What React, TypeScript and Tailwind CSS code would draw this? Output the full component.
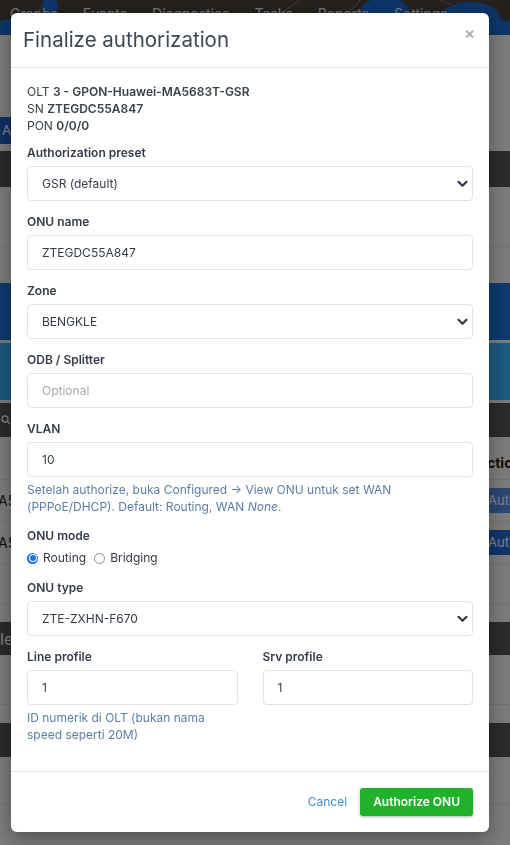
import React from 'react';

const navItems = ['Graphs', 'Events', 'Diagnostics', 'Tasks', 'Reports', 'Settings'];

function Chevron() {
  return (
    <svg width="11" height="8" viewBox="0 0 11 8" fill="none">
      <path d="M1.5 1.8 5.5 5.8 9.5 1.8" stroke="#2f3a47" strokeWidth="2.2" strokeLinecap="round" strokeLinejoin="round" />
    </svg>
  );
}

function Label({ children }: { children: React.ReactNode }) {
  return <div className="mb-1 text-[12px] font-semibold leading-[18px] text-[#343d48]">{children}</div>;
}

function Field({ value, placeholder }: { value?: string; placeholder?: string }) {
  return (
    <div className="flex h-[35px] items-center rounded-[4px] border border-[#dfe5ec] bg-white px-[14px] text-[12px]">
      {value ? <span className="text-[#333c47]">{value}</span> : <span className="text-[#a3aab3]">{placeholder}</span>}
    </div>
  );
}

function Select({ value }: { value: string }) {
  return (
    <div className="flex h-[35px] items-center justify-between rounded-[4px] border border-[#dfe5ec] bg-white pl-[14px] pr-[4px] text-[12px] text-[#333c47]">
      <span>{value}</span>
      <Chevron />
    </div>
  );
}

function Radio({ checked, label }: { checked?: boolean; label: string }) {
  return (
    <div className="flex items-center gap-[5px]">
      {checked ? (
        <span className="flex h-[11px] w-[11px] items-center justify-center rounded-full bg-[#1a73e8]">
          <span className="flex h-[8px] w-[8px] items-center justify-center rounded-full bg-white">
            <span className="h-[6px] w-[6px] rounded-full bg-[#1a73e8]" />
          </span>
        </span>
      ) : (
        <span className="h-[11px] w-[11px] rounded-full border border-[#8a8f96] bg-white" />
      )}
      <span className="text-[12px] text-[#333c47]">{label}</span>
    </div>
  );
}

// page underneath the dialog
function Page() {
  return (
    <div className="min-h-screen overflow-hidden bg-[#f7f7f7] font-['Inter',sans-serif]">
      <nav className="relative flex h-[35px] items-start gap-[25px] overflow-hidden bg-[#4a423b] pl-[10px] pt-[3px] text-[14px] text-[#e8e8e8]">
        <svg className="absolute inset-0" width="510" height="35" viewBox="0 0 510 35">
          <path d="M0 28 L30 20 L48 0 M48 0 L62 30 M30 20 L80 35" stroke="#9ab" strokeWidth="0.6" fill="none" />
          <ellipse cx="15" cy="28" rx="22" ry="9" fill="#1a6ad0" />
          <ellipse cx="50" cy="6" rx="8" ry="8" fill="#1a6ad0" />
          <ellipse cx="68" cy="25" rx="14" ry="8" fill="#1a6ad0" />
          <path d="M250 35 L300 0 M330 35 L360 0 M440 0 L510 30 M380 5 L420 35" stroke="#9ab" strokeWidth="0.6" fill="none" />
          <ellipse cx="385" cy="10" rx="24" ry="12" fill="#1a6ad0" />
          <ellipse cx="350" cy="30" rx="30" ry="10" fill="#1a6ad0" />
          <ellipse cx="470" cy="18" rx="30" ry="16" fill="#1a6ad0" />
          <ellipse cx="500" cy="30" rx="20" ry="10" fill="#1a6ad0" />
        </svg>
        {navItems.map(n => (
          <span key={n} className="relative">
            {n}
          </span>
        ))}
      </nav>
      <div className="h-[82px]" />
      <div className="h-[27px] w-[70px] rounded-r bg-[#1f5fc4] pl-[2px] pt-[4px] text-[13px] text-white">Auth</div>
      <div className="mt-[7px] h-[36px] bg-[#555]" />
      <div className="h-[60px] border-b border-[#e3e3e3]" />
      <div className="h-[36px]" />
      <div className="h-[57px] bg-[#1b74de]" />
      <div className="mt-[3px] h-[57px] bg-[#3ab0ff]" />
      <div className="mt-[3px] flex h-[34px] items-center bg-[#555] pl-[1px] text-white">
        <svg width="10" height="10" viewBox="0 0 10 10">
          <circle cx="4" cy="4" r="3" stroke="#fff" strokeWidth="1.4" fill="none" />
          <path d="M6.3 6.3 9 9" stroke="#fff" strokeWidth="1.4" />
        </svg>
      </div>
      <div className="flex h-[43px] items-end justify-end border-b border-[#e3e3e3] pb-[6px] text-[14px] font-bold text-[#222]">
        <span className="w-[23px] overflow-hidden whitespace-nowrap">ction</span>
      </div>
      <div className="flex h-[42px] items-center justify-between border-b border-[#e3e3e3] text-[14px] text-[#222]">
        <span className="ml-[-2px]">A5683T</span>
        <span className="h-[25px] w-[23px] overflow-hidden rounded-l bg-[#5a8ce8] pl-[1px] pt-[3px] text-[13px] text-white">Auth</span>
      </div>
      <div className="flex h-[42px] items-center justify-between border-b border-[#e3e3e3] text-[14px] text-[#222]">
        <span className="ml-[-2px]">A5683T</span>
        <span className="h-[25px] w-[23px] overflow-hidden rounded-l bg-[#1f6ad8] pl-[1px] pt-[3px] text-[13px] text-white">Auth</span>
      </div>
      <div className="h-[41px] border-b border-[#e3e3e3]" />
      <div className="h-[17px]" />
      <div className="flex h-[33px] items-center bg-[#555] text-[16px] text-white">le</div>
      <div className="h-[50px] border-b border-[#e3e3e3]" />
      <div className="h-[18px]" />
      <div className="h-[34px] bg-[#555]" />
      <div className="h-[48px] border-b border-[#e3e3e3]" />
    </div>
  );
}

export default function App() {
  return (
    <div className="relative">
      <Page />
      <div className="fixed inset-0 bg-black/50 pl-[11px] pt-[13px] font-['Inter',sans-serif]">
        <div className="w-[478px] overflow-hidden rounded-[6px] bg-white shadow-[0_6px_18px_rgba(0,0,0,0.35)]">
          <div className="flex items-start justify-between border-b border-[#e1e5ea] pb-[13px] pl-3 pr-[14px] pt-[13px]">
            <h5 className="text-[20.5px] leading-[28px] text-[#3b4856]">Finalize authorization</h5>
            <span className="mt-[-1px] text-[16px] font-bold leading-[16px] text-[#a9aeb4]">×</span>
          </div>

          <div className="px-4 pb-4 pt-[15px] text-[12px] text-[#38414c]">
            <div className="mb-[10px] leading-[17px]">
              <div>
                OLT <b className="font-semibold">3 - GPON-Huawei-MA5683T-GSR</b>
              </div>
              <div>
                SN <b className="font-semibold">ZTEGDC55A847</b>
              </div>
              <div>
                PON <b className="font-semibold">0/0/0</b>
              </div>
            </div>

            <div className="mb-3">
              <Label>Authorization preset</Label>
              <Select value="GSR (default)" />
            </div>
            <div className="mb-3">
              <Label>ONU name</Label>
              <Field value="ZTEGDC55A847" />
            </div>
            <div className="mb-3">
              <Label>Zone</Label>
              <Select value="BENGKLE" />
            </div>
            <div className="mb-3">
              <Label>ODB / Splitter</Label>
              <Field placeholder="Optional" />
            </div>
            <div className="mb-3">
              <Label>VLAN</Label>
              <Field value="10" />
              <p className="mt-1 leading-[17px] text-[#5a7fa6]">
                Setelah authorize, buka Configured → View ONU untuk set WAN (PPPoE/DHCP). Default: Routing, WAN <i>None</i>.
              </p>
            </div>
            <div className="mb-3">
              <Label>ONU mode</Label>
              <div className="flex h-[18px] items-center gap-[8px]">
                <Radio checked label="Routing" />
                <Radio label="Bridging" />
              </div>
            </div>
            <div className="mb-3">
              <Label>ONU type</Label>
              <Select value="ZTE-ZXHN-F670" />
            </div>
            <div className="mb-3 grid grid-cols-2 gap-x-[25px]">
              <div>
                <Label>Line profile</Label>
                <Field value="1" />
                <p className="mt-1 leading-[17px] text-[#5a7fa6]">ID numerik di OLT (bukan nama speed seperti 20M)</p>
              </div>
              <div>
                <Label>Srv profile</Label>
                <Field value="1" />
              </div>
            </div>
          </div>

          <div className="flex items-center justify-end gap-[13px] border-t border-[#e1e5ea] p-4">
            <span className="text-[12px] text-[#3b8fd4]">Cancel</span>
            <span className="flex h-[28px] items-center rounded-[3px] bg-[#22b12c] px-[13px] text-[12px] font-semibold text-white shadow-[0_1px_3px_rgba(0,0,0,0.3)]">
              Authorize ONU
            </span>
          </div>
        </div>
      </div>
    </div>
  );
}
